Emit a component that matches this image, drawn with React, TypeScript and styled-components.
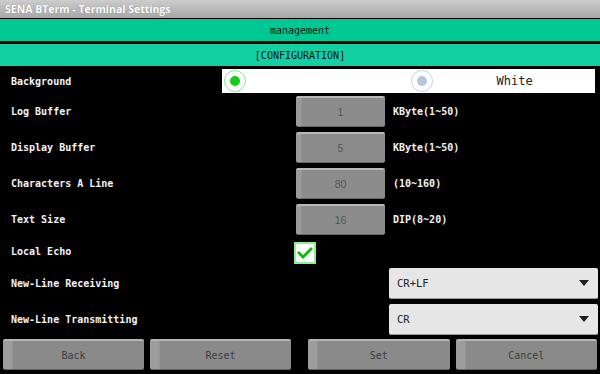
import React from 'react';
import styled, { createGlobalStyle } from 'styled-components';

const GlobalStyle = createGlobalStyle`
  html, body {
    margin: 0;
    padding: 0;
    background: #000;
  }
  #root {
    width: 600px;
    height: 374px;
    overflow: hidden;
  }
`;

const MONO = `"DejaVu Sans Mono", "Liberation Mono", monospace`;

const Screen = styled.div`
  display: flex;
  flex-direction: column;
  width: 600px;
  height: 374px;
  background: #000;
  font-family: ${MONO};
`;

const TitleBar = styled.div`
  height: 18px;
  display: flex;
  align-items: center;
  padding-left: 5px;
  background: linear-gradient(#cdcdcd, #a6a6a6);
  color: #fff;
  font-family: "Open Sans", "DejaVu Sans", sans-serif;
  font-weight: 700;
  font-size: 10.5px;
  text-shadow: 0 0 1px rgba(0, 0, 0, 0.35);
`;

const Banner = styled.div`
  height: 22px;
  margin-top: ${({ $gap }) => $gap}px;
  display: flex;
  align-items: center;
  justify-content: center;
  background: ${({ $tone }) => $tone};
  color: #111;
  font-size: 10px;
`;

const Row = styled.div`
  display: flex;
  align-items: center;
  box-sizing: border-box;
  height: ${({ $h }) => $h}px;
  padding-top: ${({ $pt = 0 }) => $pt}px;
  flex-shrink: 0;
`;

const Label = styled.div`
  width: ${({ $w }) => $w}px;
  flex-shrink: 0;
  box-sizing: border-box;
  padding-left: 11px;
  color: #f2f2f2;
  font-weight: 700;
  font-size: 10px;
`;

const RadioGroup = styled.div`
  display: flex;
  align-items: center;
  width: 373px;
  height: 24px;
  background: #fff;
`;

const RadioItem = styled.div`
  display: flex;
  align-items: center;
  flex: 1;
  padding-left: 2px;
`;

const RadioRing = styled.span`
  width: 20px;
  height: 20px;
  border-radius: 50%;
  border: 1.5px solid ${({ $on }) => ($on ? '#8ae88a' : '#c6d4e2')};
  display: flex;
  align-items: center;
  justify-content: center;
  &::after {
    content: '';
    width: 10px;
    height: 10px;
    border-radius: 50%;
    background: ${({ $on }) => ($on ? '#16cc16' : '#b4c6d8')};
  }
`;

const RadioText = styled.span`
  margin-left: 64px;
  font-size: 12px;
  color: #222;
`;

const ValueButton = styled.div`
  width: 89px;
  height: 31px;
  box-sizing: border-box;
  display: flex;
  align-items: center;
  justify-content: center;
  border-radius: 2px;
  border-top: 2px solid #b9b9b9;
  border-bottom: 1px solid #6a6a6a;
  background: linear-gradient(to right, #9b9b9b 0, #9b9b9b 5px, #8c8c8c 6px);
  color: #555;
  font-family: "Liberation Sans", Arial, sans-serif;
  font-size: 10.5px;
`;

const Unit = styled.div`
  margin-left: 8px;
  color: #f2f2f2;
  font-weight: 700;
  font-size: 10px;
`;

const CheckBox = styled.div`
  width: 22px;
  height: 22px;
  margin-top: 4px;
  box-sizing: border-box;
  border: 2px solid #8ef08e;
  background: #fff;
  display: flex;
  align-items: center;
  justify-content: center;
`;

const Spinner = styled.div`
  width: 209px;
  height: 31px;
  box-sizing: border-box;
  display: flex;
  align-items: center;
  justify-content: space-between;
  padding: 0 9px 0 8px;
  border-radius: 2px;
  border-bottom: 1px solid #9a9a9a;
  background: #e6e6e6;
  color: #222;
  font-size: 10.5px;
`;

const Footer = styled.div`
  display: flex;
  height: 37px;
  padding-top: 2px;
  box-sizing: border-box;
`;

const FooterHalf = styled.div`
  display: flex;
  width: 300px;
  gap: 6px;
  padding: ${({ $pad }) => $pad};
  box-sizing: border-box;
`;

const ActionButton = styled.div`
  flex: 1;
  height: 31px;
  box-sizing: border-box;
  display: flex;
  align-items: center;
  justify-content: center;
  border-radius: 2px;
  border-top: 2px solid #b5b5b5;
  border-bottom: 1px solid #666;
  background: linear-gradient(to right, #9d9d9d 0, #9d9d9d 9px, #8a8a8a 10px);
  color: #3c3c3c;
  font-size: 10px;
`;

const Check = () => (
  <svg width="16" height="14" viewBox="0 0 16 14">
    <polyline points="2,7 6,11 14,3" fill="none" stroke="#00c000" strokeWidth="2.8" strokeLinecap="square" />
  </svg>
);

const Caret = () => (
  <svg width="10" height="6" viewBox="0 0 10 6">
    <polygon points="0,0 10,0 5,6" fill="#1e1e1e" />
  </svg>
);

const numberRows = [
  { label: 'Log Buffer', value: '1', unit: 'KByte(1~50)' },
  { label: 'Display Buffer', value: '5', unit: 'KByte(1~50)' },
  { label: 'Characters A Line', value: '80', unit: '(10~160)' },
  { label: 'Text Size', value: '16', unit: 'DIP(8~20)' },
];

const App = () => (
  <>
    <GlobalStyle />
    <Screen>
      <TitleBar>SENA BTerm - Terminal Settings</TitleBar>
      <Banner $gap={1} $tone="#00c894">management</Banner>
      <Banner $gap={3} $tone="#12d0a2">[CONFIGURATION]</Banner>

      <Row $h={27} $pt={3}>
        <Label $w={222}>Background</Label>
        <RadioGroup>
          <RadioItem>
            <RadioRing $on />
          </RadioItem>
          <RadioItem>
            <RadioRing />
            <RadioText>White</RadioText>
          </RadioItem>
        </RadioGroup>
      </Row>

      {numberRows.map((r) => (
        <Row $h={36} key={r.label}>
          <Label $w={296}>{r.label}</Label>
          <ValueButton>{r.value}</ValueButton>
          <Unit>{r.unit}</Unit>
        </Row>
      ))}

      <Row $h={28}>
        <Label $w={294}>Local Echo</Label>
        <CheckBox>
          <Check />
        </CheckBox>
      </Row>

      <Row $h={36}>
        <Label $w={389}>New-Line Receiving</Label>
        <Spinner>
          <span>CR+LF</span>
          <Caret />
        </Spinner>
      </Row>
      <Row $h={36}>
        <Label $w={389}>New-Line Transmitting</Label>
        <Spinner>
          <span>CR</span>
          <Caret />
        </Spinner>
      </Row>

      <Footer>
        <FooterHalf $pad="0 9px 0 3px">
          <ActionButton>Back</ActionButton>
          <ActionButton>Reset</ActionButton>
        </FooterHalf>
        <FooterHalf $pad="0 3px 0 8px">
          <ActionButton>Set</ActionButton>
          <ActionButton>Cancel</ActionButton>
        </FooterHalf>
      </Footer>
    </Screen>
  </>
);

export default App;
